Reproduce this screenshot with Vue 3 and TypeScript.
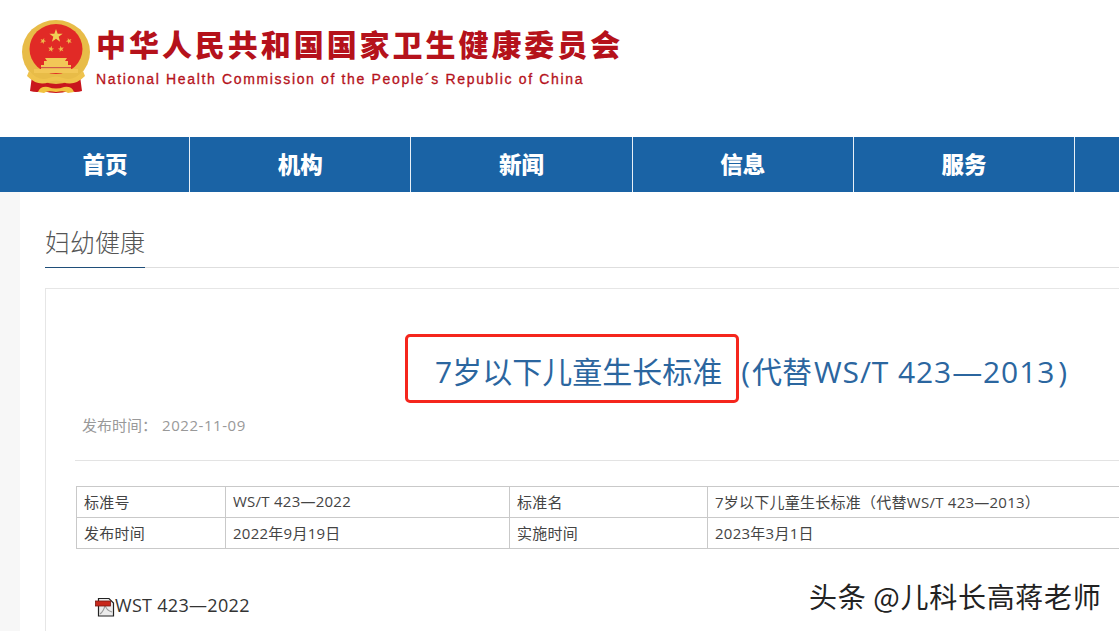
<script setup lang="ts">
const navItems: string[] = ['首页', '机构', '新闻', '信息', '服务']
const rows: string[][] = [
  ['标准号', 'WS/T 423—2022', '标准名', '7岁以下儿童生长标准（代替WS/T 423—2013）'],
  ['发布时间', '2022年9月19日', '实施时间', '2023年3月1日'],
]

function star(cx: number, cy: number, r: number, rot = 0): string {
  const pts: string[] = []
  for (let i = 0; i < 10; i++) {
    const rad = i % 2 === 0 ? r : r * 0.4
    const a = -Math.PI / 2 + rot + (i * Math.PI) / 5
    pts.push(`${(cx + rad * Math.cos(a)).toFixed(2)},${(cy + rad * Math.sin(a)).toFixed(2)}`)
  }
  return pts.join(' ')
}
const smallStars: string[] = [
  star(22, 21, 3.2, 0.4),
  star(48, 21, 3.2, -0.4),
  star(30, 29, 3.2, 0.2),
  star(40, 29, 3.2, -0.2),
]
</script>

<template>
  <div class="page">
    <header class="masthead">
      <svg class="emblem" viewBox="0 0 70 74" width="70" height="74" aria-hidden="true">
        <path d="M11 56 L9 71 Q16 73 22 71 Q35 75 48 71 Q55 73 61 71 L59 56 Z" fill="#c9161d" />
        <ellipse cx="35" cy="32" rx="34" ry="32" fill="#e8bc48" />
        <ellipse cx="35" cy="29" rx="26.500" ry="25" fill="#e12a26" />
        <polygon :points="star(35, 16, 7)" fill="#f0cf55" />
        <polygon v-for="p in smallStars" :key="p" :points="p" fill="#eeb94a" />
        <path d="M24 38 H46 L44 41 H47 V45 H50 V49 H57 V53 H13 V49 H20 V45 H23 V41 H26 Z" fill="#f2c757" />
        <path d="M20 47 h30 v1.200 h-30z" fill="#d0584a" />
        <path d="M8 51 Q18 62 28 58 Q35 55 42 58 Q52 62 62 51 L64 56 Q53 67 42 62 Q35 59 28 62 Q17 67 6 56 Z" fill="#efc34d" />
        <path d="M17 72 Q19 66 27 67 Q35 70 43 67 Q51 66 53 72 L47 73 Q44 70 35 72 Q26 70 23 73 Z" fill="#f1c23f" />
      </svg>
      <div class="brand">
        <div class="brand-cn">中华人民共和国国家卫生健康委员会</div>
        <div class="brand-en">National Health Commission of the People´s Republic of China</div>
      </div>
    </header>

    <nav class="nav">
      <a v-for="item in navItems" :key="item" class="nav-item">{{ item }}</a>
      <a class="nav-item" />
    </nav>

    <div class="body">
      <aside class="rail" />
      <main class="main">
        <div class="section-head">
          <h2 class="section-title">妇幼健康</h2>
        </div>

        <article class="card">
          <div class="title-row">
            <h1 class="title">7岁以下儿童生长标准<span class="title-rest">(<span class="title-cn">代替</span><span class="title-latin">WS/T 423—2013</span>)</span></h1>
            <div class="mark" />
          </div>
          <div class="meta"><span>发布时间：</span><span class="meta-date">2022-11-09</span></div>
          <div class="rule" />
          <table class="info">
            <colgroup>
              <col class="c1" /><col class="c2" /><col class="c3" /><col class="c4" />
            </colgroup>
            <tbody>
              <tr v-for="(row, i) in rows" :key="i">
                <td v-for="cell in row" :key="cell">{{ cell }}</td>
              </tr>
            </tbody>
          </table>
          <div class="attach">
            <svg class="pdf" viewBox="0 0 20 20" width="20" height="20" aria-hidden="true">
              <path d="M3.500 1.500 H14 L18.500 6 V19 H3.500 Z" fill="#ececec" stroke="#222" stroke-width="1.200" />
              <path d="M5 17 Q9 14 10 8 Q11 13 17 15" fill="none" stroke="#9a9a9a" stroke-width="1.200" />
              <rect x="0.500" y="4" width="15" height="5" fill="#c8281c" stroke="#7a1a12" stroke-width="0.800" />
            </svg>
            <span>WST 423—2022</span>
          </div>
        </article>
      </main>
    </div>

    <div class="watermark">头条 @儿科长高蒋老师</div>
  </div>
</template>

<style>
html, body { margin: 0; background: #fff; }
</style>

<style scoped>
.page {
  position: relative;
  width: 1119px;
  height: 631px;
  overflow: hidden;
  background: #fff;
  font-family: "Open Sans", "Noto Sans CJK SC", sans-serif;
  color: #333;
}
.masthead {
  height: 137px;
  box-sizing: border-box;
  display: flex;
  align-items: flex-start;
  padding: 20px 0 0 21px;
  gap: 5px;
}
.emblem { flex: none; }
.brand { padding-top: 3px; }
.brand-cn {
  font-family: "Noto Sans CJK SC", sans-serif;
  font-size: 30px;
  line-height: 40px;
  font-weight: 900;
  letter-spacing: 2.950px;
  color: #b5121b;
  white-space: nowrap;
}
.brand-en {
  margin-top: 7px;
  font-family: "Liberation Sans", sans-serif;
  font-size: 14px;
  line-height: 18px;
  letter-spacing: 1.650px;
  -webkit-text-stroke: 0.3px #b5121b;
  color: #b5121b;
  white-space: nowrap;
}
.nav {
  display: flex;
  height: 55px;
  background: #1a63a5;
}
.nav-item {
  flex: none;
  width: 221.300px;
  box-sizing: border-box;
  padding-bottom: 3px;
  border-right: 1px solid #e8f0f7;
  display: flex;
  align-items: center;
  justify-content: center;
  color: #fff;
  font-family: "Noto Sans CJK SC", sans-serif;
  font-size: 22.500px;
  font-weight: 900;
}
.nav-item:first-child { width: 190px; padding-left: 21px; }
.body { display: flex; }
.rail { flex: none; width: 20px; height: 439px; background: #f7f7f7; }
.main { flex: 1; padding: 0 0 0 25px; min-width: 0; }
.section-head {
  height: 76px;
  box-sizing: border-box;
  border-bottom: 1px solid #dedede;
  display: flex;
  align-items: flex-end;
}
.section-title {
  margin: 0 0 -1px;
  width: 100px;
  height: 50px;
  line-height: 46px;
  box-sizing: border-box;
  border-bottom: 1px solid #1f4e79;
  font-size: 25px;
  font-weight: 300;
  color: #555;
  font-family: "Noto Sans CJK SC", sans-serif;
}
.card {
  margin-top: 20px;
  margin-right: -60px;
  height: 400px;
  border: 1px solid #e6e6e6;
  box-sizing: border-box;
  padding-left: 29px;
}
.title-row {
  position: relative;
  margin: 59px 0 0 360px;
  height: 48px;
}
.title {
  margin: 0;
  font-size: 30px;
  line-height: 48px;
  font-weight: 400;
  color: #2b669f;
  white-space: nowrap;
  font-family: "Open Sans", "Noto Sans CJK SC", sans-serif;
}
.title-rest { margin-left: 19px; }
.title-cn { margin-left: 2px; }
.title-latin { margin: 0 3px 0 2px; letter-spacing: 0.900px; }
.mark {
  position: absolute;
  left: -30px;
  top: -14px;
  width: 334px;
  height: 69px;
  box-sizing: border-box;
  border: 3px solid #f5261d;
  border-radius: 5px;
}
.meta {
  margin: 19px 0 0 7px;
  font-size: 15px;
  line-height: 20px;
  color: #999;
}
.meta-date { margin-left: 5px; letter-spacing: 0.550px; }
.rule { margin-top: 25px; border-top: 1px solid #e3e3e3; }
.info {
  margin: 25px 0 0 1px;
  border-collapse: collapse;
  table-layout: fixed;
  width: 1100px;
  font-size: 15px;
  letter-spacing: 0.250px;
  color: #444;
}
.info td {
  border: 1px solid #c9c9c9;
  height: 31px;
  padding: 0 7px 2px;
  box-sizing: border-box;
  white-space: nowrap;
}
.c1 { width: 149px; }
.c2 { width: 284px; }
.c3 { width: 198px; }
.attach {
  margin: 44px 0 0 20px;
  display: flex;
  align-items: center;
  font-size: 18px;
  line-height: 24px;
  letter-spacing: 0.300px;
  color: #333;
}
.pdf { flex: none; margin-top: 3px; }
.watermark {
  position: absolute;
  left: 809px;
  top: 578px;
  font-family: "Noto Sans CJK SC", sans-serif;
  font-size: 28px;
  line-height: 36px;
  letter-spacing: 0.700px;
  color: #222;
  text-shadow: 1px 1px 0 #fff, -1px -1px 0 #fff;
  white-space: nowrap;
}
</style>
